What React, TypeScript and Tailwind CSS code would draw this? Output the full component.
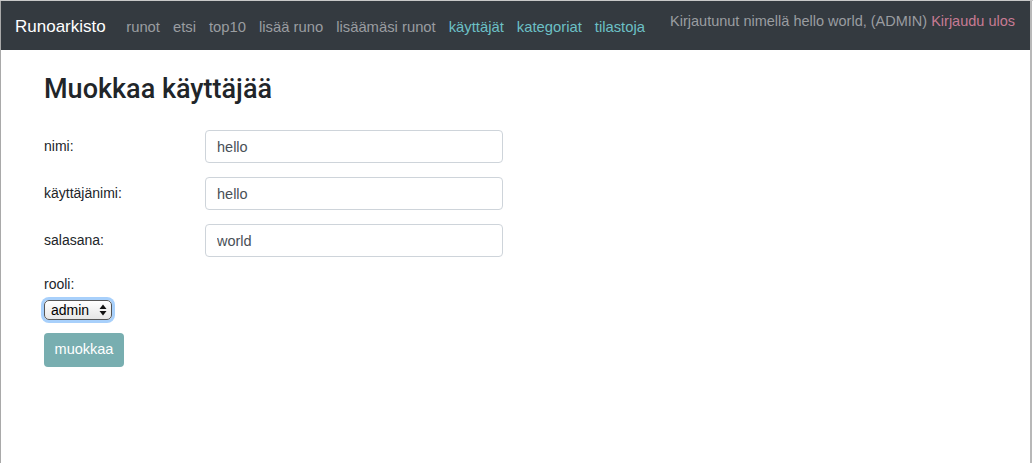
const links = ['runot', 'etsi', 'top10', 'lisää runo', 'lisäämäsi runot'];
const adminLinks = ['käyttäjät', 'kategoriat', 'tilastoja'];

const fields = [
  { label: 'nimi:', value: 'hello' },
  { label: 'käyttäjänimi:', value: 'hello' },
  { label: 'salasana:', value: 'world' },
];

export default function App() {
  return (
    <div className="flex h-[463px] w-[1033px] flex-col bg-white font-['Liberation_Sans',Arial,sans-serif]">
      <div className="h-px bg-[#c8c8c8]" />
      <div className="flex flex-1 border-l border-[#a9a9a9]">
        <div className="flex flex-1 flex-col">
          <nav className="flex h-[49px] items-start bg-[#343a40] pl-[14px] pr-[15px]">
            <span className="mt-[13px] text-[17px] text-white">Runoarkisto</span>
            <ul className="ml-[14px] mt-[17px] flex text-[14.8px] leading-[18px]">
              {links.map((l) => (
                <li key={l} className="px-[6.5px] text-[#9a9da1]">{l}</li>
              ))}
              {adminLinks.map((l) => (
                <li key={l} className="px-[6.5px] text-[#6cc0c6]">{l}</li>
              ))}
            </ul>
            <p className="ml-auto mt-[11px] text-[14.5px] leading-[18px] text-[#9a9da1]">
              Kirjautunut nimellä hello world, (ADMIN) <span className="text-[#c77b94]">Kirjaudu ulos</span>
            </p>
          </nav>
          <main className="flex-1 pl-[43px] pt-[22px] text-[14px] text-[#212529]">
            <h1 className="font-['Roboto',sans-serif] text-[27px] font-medium leading-[34px] text-[#212529]">Muokkaa käyttäjää</h1>
            <form className="mt-[24px] flex flex-col">
              {fields.map((f) => (
                <div key={f.label} className="mb-[14px] flex items-center">
                  <label className="w-[161px]">{f.label}</label>
                  <input
                    readOnly
                    value={f.value}
                    className="h-[33px] w-[298px] rounded-[4px] border border-[#ced4da] px-[11px] text-[14.5px] text-[#495057] outline-none"
                  />
                </div>
              ))}
              <label className="mt-[4px] leading-[18px]">rooli:</label>
              <div className="mt-[7px] flex h-[20px] w-[68px] items-center justify-between rounded-[5px] border border-[#555] bg-gradient-to-b from-white to-[#e6e6e6] pl-[6px] pr-[4px] text-[14px] text-black shadow-[0_0_0_3px_#a8d0fb]">
                <span>admin</span>
                <svg width="8" height="12" viewBox="0 0 8 12">
                  <path d="M4 0.5 L7.5 5 H0.5 Z M4 11.5 L7.5 7 H0.5 Z" fill="#111" />
                </svg>
              </div>
              <button
                type="button"
                className="mt-[13px] h-[34px] w-[80px] rounded-[4px] bg-[#78aeb0] text-[14.5px] text-white"
              >
                muokkaa
              </button>
            </form>
          </main>
        </div>
        <div className="w-[2px] bg-[#b8b8b8]" />
        <div className="w-px bg-white" />
      </div>
    </div>
  );
}
